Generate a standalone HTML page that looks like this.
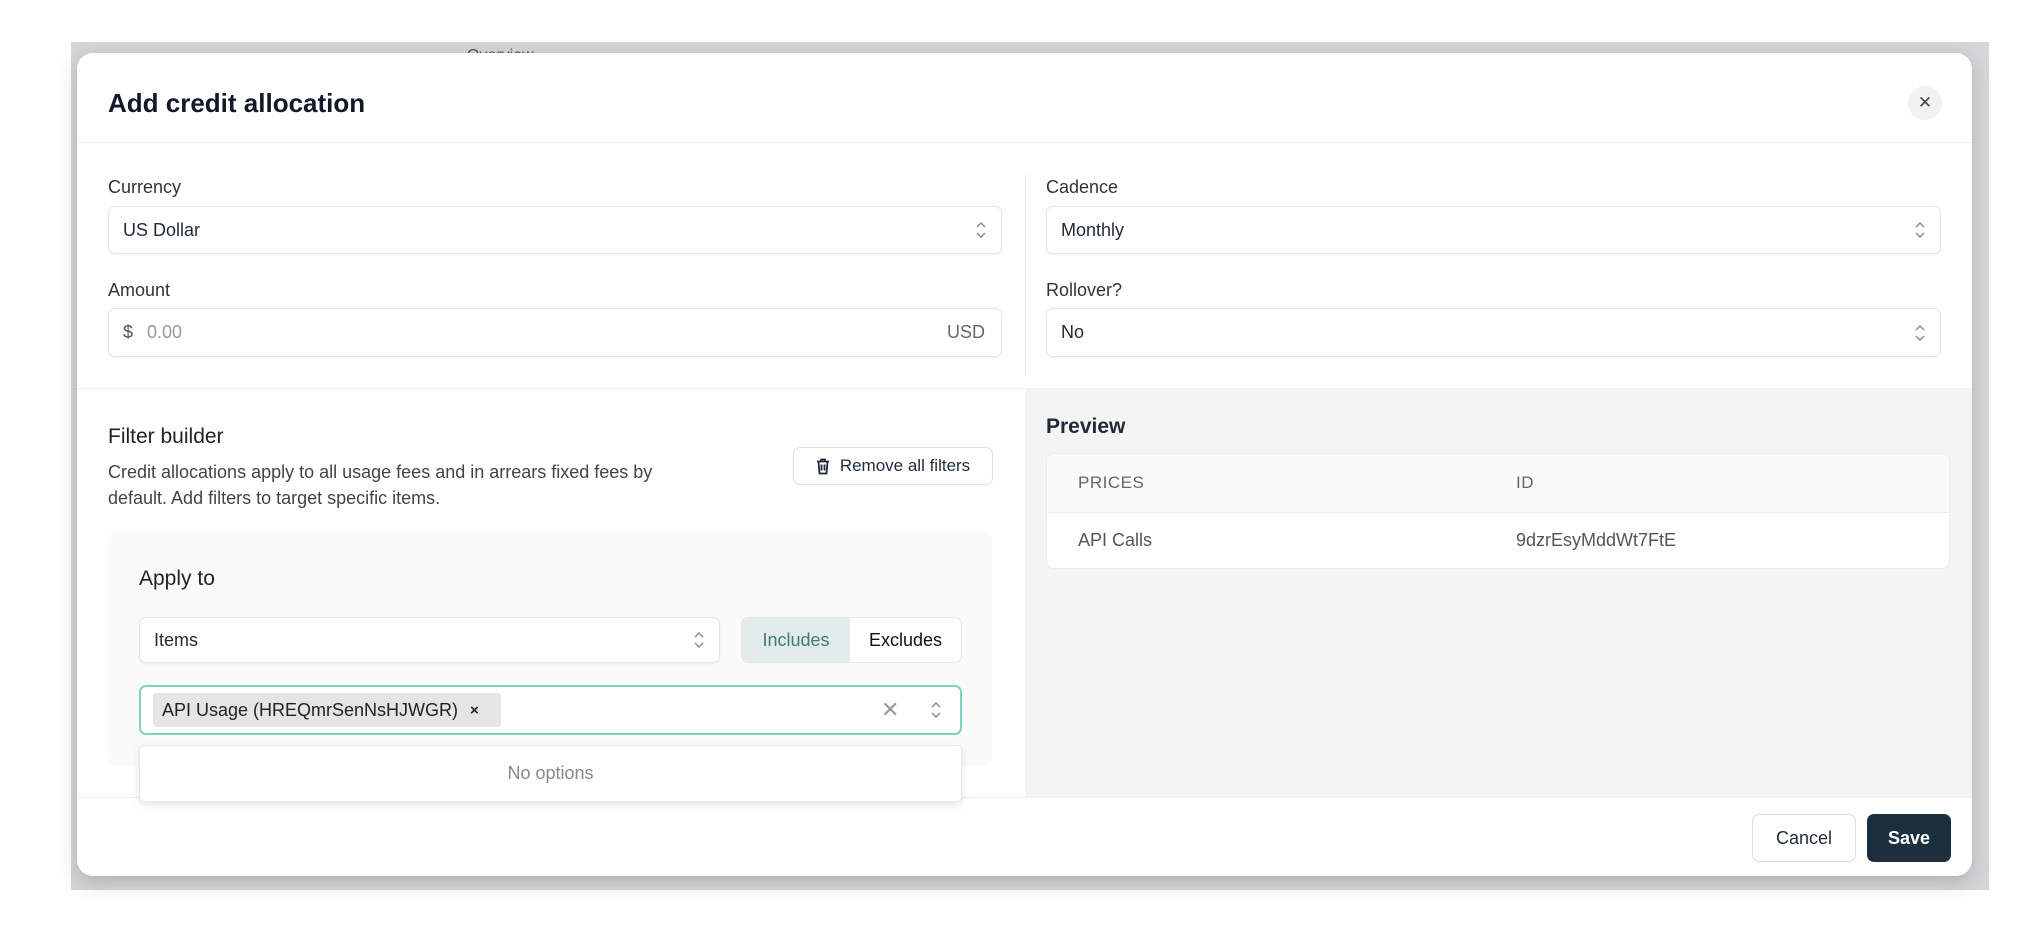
<!DOCTYPE html>
<html><head><meta charset="utf-8"><style>
*{box-sizing:border-box;margin:0;padding:0}
body{width:2036px;height:944px;background:#fff;font-family:"Liberation Sans",sans-serif;position:relative;overflow:hidden;color:#1f2937}
.abs{position:absolute}
.backdrop{left:71px;top:42px;width:1918px;height:848px;background:#d6d6d8}
.modal{left:77px;top:53px;width:1895px;height:823px;background:#fff;border-radius:16px;box-shadow:0 6px 20px rgba(0,0,0,.18);overflow:hidden}
.lbl{font-size:18px;color:#333}
.sel{background:#fff;border:1px solid #e5e5e5;border-radius:7px;box-shadow:0 1px 2px rgba(0,0,0,.06);font-size:18px;color:#1f2937;display:flex;align-items:center;padding-left:14px}
.chev{position:absolute;right:14px;top:50%;transform:translateY(-50%)}
</style></head><body>
<div class="abs backdrop"></div>
<div class="abs" style="left:467px;top:47px;font-size:16px;color:#555;height:6px;overflow:hidden">Overview</div>
<div class="abs modal">
  <div class="abs" style="left:31px;top:35px;font-size:26px;font-weight:bold;color:#111827">Add credit allocation</div>
  <div class="abs" style="left:1831px;top:33px;width:34px;height:34px;border-radius:50%;background:#f1f1f1;display:flex;align-items:center;justify-content:center;font-size:17px;color:#444">✕</div>
  <div class="abs" style="left:0;top:89px;width:1895px;height:1px;background:#eee"></div>
  <div class="abs" style="left:948px;top:122px;width:1px;height:201px;background:#eee"></div>

  <div class="abs lbl" style="left:31px;top:124px">Currency</div>
  <div class="abs sel" style="left:31px;top:153px;width:894px;height:48px">US Dollar<svg class="chev" width="12" height="20" viewBox="0 0 12 20"><path d="M2 7l4-4 4 4M2 13l4 4 4-4" fill="none" stroke="#888" stroke-width="1.4"/></svg></div>
  <div class="abs lbl" style="left:31px;top:227px">Amount</div>
  <div class="abs sel" style="left:31px;top:255px;width:894px;height:49px;color:#999"><span style="color:#555;margin-right:14px">$</span>0.00<span style="position:absolute;right:16px;color:#666">USD</span></div>

  <div class="abs lbl" style="left:969px;top:124px">Cadence</div>
  <div class="abs sel" style="left:969px;top:153px;width:895px;height:48px">Monthly<svg class="chev" width="12" height="20" viewBox="0 0 12 20"><path d="M2 7l4-4 4 4M2 13l4 4 4-4" fill="none" stroke="#888" stroke-width="1.4"/></svg></div>
  <div class="abs lbl" style="left:969px;top:227px">Rollover?</div>
  <div class="abs sel" style="left:969px;top:255px;width:895px;height:49px">No<svg class="chev" width="12" height="20" viewBox="0 0 12 20"><path d="M2 7l4-4 4 4M2 13l4 4 4-4" fill="none" stroke="#888" stroke-width="1.4"/></svg></div>

  <div class="abs" style="left:0;top:335px;width:1895px;height:1px;background:#eee"></div>
  <div class="abs" style="left:948px;top:335px;width:947px;height:409px;background:#f4f4f4"></div>
  <div class="abs" style="left:0;top:744px;width:1895px;height:1px;background:#eee"></div>

  <div class="abs" style="left:31px;top:372px;font-size:21px;color:#222">Filter builder</div>
  <div class="abs" style="left:31px;top:406px;font-size:18px;color:#444;line-height:26px;width:600px">Credit allocations apply to all usage fees and in arrears fixed fees by default. Add filters to target specific items.</div>
  <div class="abs" style="left:716px;top:394px;width:200px;height:38px;border:1px solid #ddd;border-radius:7px;display:flex;align-items:center;justify-content:center;font-size:17px;color:#1e2a3a;gap:10px"><svg width="14" height="17" viewBox="0 0 14 17"><path d="M1 3.5h12M5 3.5V1.5h4v2M2.5 3.5l1 12h7l1-12M5.5 6.5v6M8.5 6.5v6" fill="none" stroke="#1e2a3a" stroke-width="1.8"/></svg>Remove all filters</div>

  <div class="abs" style="left:31px;top:478px;width:884px;height:235px;background:#fafafa;border-radius:10px"></div>
  <div class="abs" style="left:62px;top:514px;font-size:21px;color:#222">Apply to</div>
  <div class="abs sel" style="left:62px;top:564px;width:581px;height:46px">Items<svg class="chev" width="12" height="20" viewBox="0 0 12 20"><path d="M2 7l4-4 4 4M2 13l4 4 4-4" fill="none" stroke="#888" stroke-width="1.4"/></svg></div>
  <div class="abs" style="left:664px;top:564px;width:221px;height:46px;border:1px solid #e5e5e5;border-radius:7px;overflow:hidden;display:flex;font-size:18px;background:#fff">
    <div style="width:108px;background:#e1ecea;color:#3f7c6e;display:flex;align-items:center;justify-content:center">Includes</div>
    <div style="flex:1;display:flex;align-items:center;justify-content:center;color:#111">Excludes</div>
  </div>
  <div class="abs" style="left:62px;top:632px;width:823px;height:50px;border:2px solid #7dd3c5;border-radius:7px;background:#fff"></div>
  <div class="abs" style="left:76px;top:640px;width:348px;height:34px;background:#e5e5e5;border-radius:3px;display:flex;align-items:center;padding-left:9px;font-size:18px;color:#222">API Usage (HREQmrSenNsHJWGR)<span style="margin-left:12px;font-size:15px;font-weight:bold">×</span></div>
  <div class="abs" style="left:804px;top:644px;font-size:22px;color:#999">✕</div>
  <svg class="abs" style="left:853px;top:647px" width="12" height="20" viewBox="0 0 12 20"><path d="M2 7l4-4 4 4M2 13l4 4 4-4" fill="none" stroke="#888" stroke-width="1.4"/></svg>
  <div class="abs" style="left:62px;top:692px;width:823px;height:57px;background:#fff;border:1px solid #e8e8e8;border-radius:5px;box-shadow:0 3px 8px rgba(0,0,0,.1);display:flex;align-items:center;justify-content:center;font-size:18px;color:#888">No options</div>

  <div class="abs" style="left:969px;top:362px;font-size:21px;font-weight:bold;color:#1f2937">Preview</div>
  <div class="abs" style="left:969px;top:400px;width:904px;height:116px;background:#fff;border:1px solid #ececec;border-radius:8px;overflow:hidden">
    <div style="height:59px;background:#fafafa;border-bottom:1px solid #eee;position:relative;font-size:17px;color:#666;letter-spacing:.5px">
      <span class="abs" style="left:31px;top:19px">PRICES</span><span class="abs" style="left:469px;top:19px">ID</span>
    </div>
    <div style="position:relative;font-size:18px;color:#555">
      <span class="abs" style="left:31px;top:17px">API Calls</span><span class="abs" style="left:469px;top:17px">9dzrEsyMddWt7FtE</span>
    </div>
  </div>

  <div class="abs" style="left:1675px;top:761px;width:104px;height:48px;border:1px solid #ddd;border-radius:7px;display:flex;align-items:center;justify-content:center;font-size:18px;color:#1e2a3a">Cancel</div>
  <div class="abs" style="left:1790px;top:761px;width:84px;height:48px;background:#1b2f3f;border-radius:7px;display:flex;align-items:center;justify-content:center;font-size:18px;font-weight:bold;color:#fff">Save</div>
</div>
</body></html>
